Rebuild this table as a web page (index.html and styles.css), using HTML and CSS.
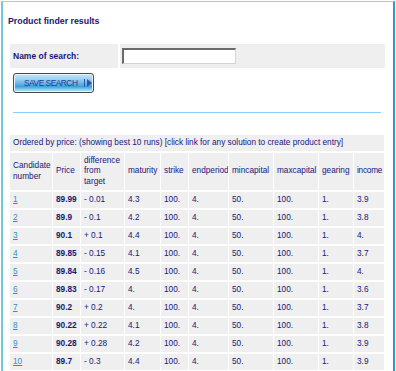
FILE: index.html
```html
<!DOCTYPE html>
<html>
<head>
<meta charset="utf-8">
<link rel="stylesheet" href="styles.css">
</head>
<body>
<div class="frame">
  <h1 class="title">Product finder results</h1>
  <div class="form-row">
    <div class="label-cell">Name of search:</div>
    <div class="input-cell"><input class="search-input" type="text"></div>
  </div>
  <div class="btn-wrap">
    <button class="save-btn" type="button"><span class="btn-text">SAVE SEARCH</span><span class="btn-bar"></span><span class="btn-arrow"></span></button>
  </div>
  <div class="divider"></div>
  <table class="results">
    <colgroup>
      <col style="width:42px"><col style="width:27px"><col style="width:43px"><col style="width:35px"><col style="width:27px"><col style="width:39px"><col style="width:44px"><col style="width:44px"><col style="width:34px"><col style="width:30px">
    </colgroup>
    <tr class="cap"><td colspan="10">Ordered by price: (showing best 10 runs) [click link for any solution to create product entry]</td></tr>
    <tr class="head">
      <td>Candidate number</td><td>Price</td><td>difference from target</td><td>maturity</td><td>strike</td><td>endperiod</td><td>mincapital</td><td>maxcapital</td><td>gearing</td><td class="nw">income</td>
    </tr>
    <tr><td><a href="#">1</a></td><td class="b">89.99</td><td>- 0.01</td><td>4.3</td><td>100.</td><td>4.</td><td>50.</td><td>100.</td><td>1.</td><td>3.9</td></tr>
    <tr><td><a href="#">2</a></td><td class="b">89.9</td><td>- 0.1</td><td>4.2</td><td>100.</td><td>4.</td><td>50.</td><td>100.</td><td>1.</td><td>3.8</td></tr>
    <tr><td><a href="#">3</a></td><td class="b">90.1</td><td>+ 0.1</td><td>4.4</td><td>100.</td><td>4.</td><td>50.</td><td>100.</td><td>1.</td><td>4.</td></tr>
    <tr><td><a href="#">4</a></td><td class="b">89.85</td><td>- 0.15</td><td>4.1</td><td>100.</td><td>4.</td><td>50.</td><td>100.</td><td>1.</td><td>3.7</td></tr>
    <tr><td><a href="#">5</a></td><td class="b">89.84</td><td>- 0.16</td><td>4.5</td><td>100.</td><td>4.</td><td>50.</td><td>100.</td><td>1.</td><td>4.</td></tr>
    <tr><td><a href="#">6</a></td><td class="b">89.83</td><td>- 0.17</td><td>4.</td><td>100.</td><td>4.</td><td>50.</td><td>100.</td><td>1.</td><td>3.6</td></tr>
    <tr><td><a href="#">7</a></td><td class="b">90.2</td><td>+ 0.2</td><td>4.</td><td>100.</td><td>4.</td><td>50.</td><td>100.</td><td>1.</td><td>3.7</td></tr>
    <tr><td><a href="#">8</a></td><td class="b">90.22</td><td>+ 0.22</td><td>4.1</td><td>100.</td><td>4.</td><td>50.</td><td>100.</td><td>1.</td><td>3.8</td></tr>
    <tr><td><a href="#">9</a></td><td class="b">90.28</td><td>+ 0.28</td><td>4.2</td><td>100.</td><td>4.</td><td>50.</td><td>100.</td><td>1.</td><td>3.9</td></tr>
    <tr><td><a href="#">10</a></td><td class="b">89.7</td><td>- 0.3</td><td>4.4</td><td>100.</td><td>4.</td><td>50.</td><td>100.</td><td>1.</td><td>3.9</td></tr>
  </table>
</div>
</body>
</html>
```
FILE: styles.css
```css
html, body {
  margin: 0;
  padding: 0;
  background: #ffffff;
}
body {
  font-family: "Liberation Sans", Arial, sans-serif;
  color: #16167a;
}
.frame {
  margin: 1px 0 0 1px;
  width: 390px;
  height: 369px;
  overflow: hidden;
  border-top: 1px solid #8fd6e6;
  border-left: 2px solid #74c8da;
  border-right: 2px solid #3c96c2;
  box-sizing: content-box;
}
.title {
  margin: 0;
  padding: 14px 0 0 5px;
  font-size: 8.8px;
  font-weight: bold;
  line-height: 10px;
  height: 28px;
  box-sizing: border-box;
}
.form-row {
  margin: 14px 0 0 7px;
  width: 375px;
  height: 24px;
  display: flex;
  gap: 2px;
}
.label-cell {
  width: 108px;
  background: #efefef;
  font-size: 8.5px;
  font-weight: bold;
  line-height: 24px;
  padding-left: 3px;
  box-sizing: border-box;
}
.input-cell {
  flex: 1;
  background: #efefef;
  padding: 4px 0 0 2px;
  box-sizing: border-box;
}
.search-input {
  display: block;
  margin: 0;
  width: 114px;
  height: 16px;
  box-sizing: border-box;
  border-style: solid;
  border-width: 2px 1px 1px 2px;
  border-color: #6a6a6a #d4d4d4 #d4d4d4 #6a6a6a;
  background: #fff;
  padding: 0;
}
.btn-wrap {
  margin: 5px 0 0 10px;
  height: 20px;
}
.save-btn {
  display: flex;
  align-items: center;
  width: 81px;
  height: 20px;
  margin: 0;
  padding: 0 0 0 10px;
  box-sizing: border-box;
  border: 1px solid #4a4a4a;
  border-radius: 3px;
  box-shadow: inset 0 0 0 1px #e8f4fc;
  background: linear-gradient(to bottom, #c4e6fb 0%, #9ccff3 30%, #62b2e8 55%, #429fdd 70%, #88d8f0 88%, #b4e8f6 100%);
  font-family: "Liberation Sans", Arial, sans-serif;
  font-size: 8.4px;
  letter-spacing: -0.5px;
  color: #1c3c8c;
}
.btn-text {
  line-height: 10px;
}
.btn-bar {
  width: 1px;
  height: 8px;
  background: #2858a8;
  margin-left: 7px;
}
.btn-arrow {
  width: 0;
  height: 0;
  margin-left: 2px;
  border-top: 4px solid transparent;
  border-bottom: 4px solid transparent;
  border-left: 5px solid #2858a8;
}
.divider {
  margin: 19px 0 0 10px;
  width: 368px;
  height: 1px;
  background: #8ccefc;
}
.results {
  margin: 20px 0 0 6px;
  border-collapse: separate;
  border-spacing: 1px 2px;
  table-layout: fixed;
  width: 376px;
  font-size: 8.25px;
  line-height: 10.3px;
}
.results td {
  background: #efefef;
  padding: 0 0 0 3px;
  height: 16px;
  vertical-align: middle;
  white-space: nowrap;
  overflow: hidden;
}
.results tr.head td {
  height: 37px;
  padding-right: 2px;
  white-space: normal;
}
.results tr.head td.nw {
  white-space: nowrap;
  padding-right: 0;
  overflow: visible;
  letter-spacing: -0.25px;
}
.results td.b {
  font-weight: bold;
}
.results a {
  color: #2f8fc8;
  text-decoration: underline;
}
```
